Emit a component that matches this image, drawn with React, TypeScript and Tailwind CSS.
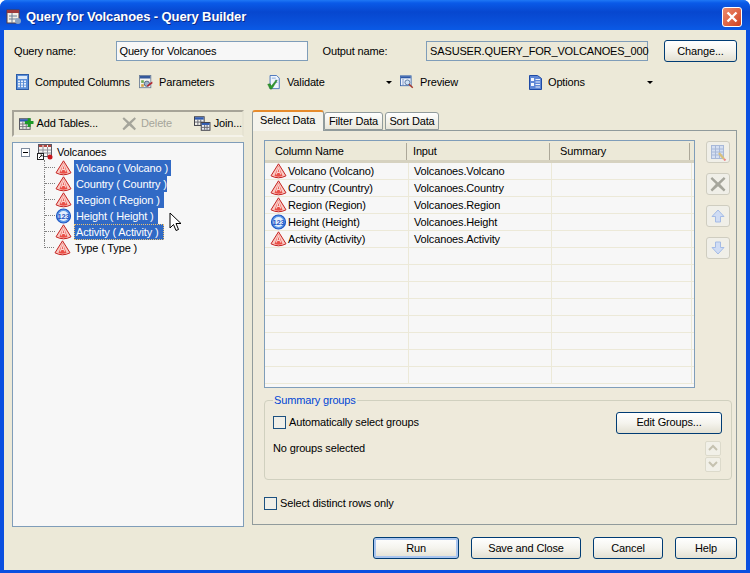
import type { ReactNode } from 'react'

const columns = [
  { name: 'Volcano (Volcano)', input: 'Volcanoes.Volcano', type: 'char' },
  { name: 'Country (Country)', input: 'Volcanoes.Country', type: 'char' },
  { name: 'Region (Region)', input: 'Volcanoes.Region', type: 'char' },
  { name: 'Height (Height)', input: 'Volcanoes.Height', type: 'num' },
  { name: 'Activity (Activity)', input: 'Volcanoes.Activity', type: 'char' },
]

const treeItems = [
  { label: 'Volcano ( Volcano )', type: 'char', width: 'w-[97px]', selected: true },
  { label: 'Country ( Country )', type: 'char', width: 'w-[93px]', selected: true },
  { label: 'Region ( Region )', type: 'char', width: 'w-[90px]', selected: true },
  { label: 'Height ( Height )', type: 'num', width: 'w-[84px]', selected: true },
  { label: 'Activity ( Activity )', type: 'char', width: 'w-[90px]', selected: true, focus: true },
  { label: 'Type ( Type )', type: 'char', width: 'w-[70px]', selected: false },
]

function CharIcon() {
  return (
    <svg width="17" height="16" viewBox="0 0 17 16" className="shrink-0">
      <path d="M8.5 0.8 L16 12.8 Q8.5 16.8 1 12.8 Z" fill="#f9c9c2" stroke="#c4211f" strokeWidth="1" />
      <path d="M8.5 3 L4.5 13 Q8.5 14.6 12.5 13 Z" fill="#ea4f47" />
      <path d="M8.5 4.5 L6.4 11.5 M8.5 4.5 L10.6 11.5 M7.2 9.4 L9.8 9.4" stroke="#fde4e0" strokeWidth="1" fill="none" />
    </svg>
  )
}

function NumIcon() {
  return (
    <svg width="17" height="16" viewBox="0 0 17 16" className="shrink-0">
      <circle cx="8.5" cy="8" r="7" fill="#5f9be8" stroke="#1f56c4" strokeWidth="1.2" />
      <circle cx="8.5" cy="8" r="5" fill="#e4effc" />
      <text x="8.5" y="10.5" textAnchor="middle" fontSize="7.5" fontFamily="Liberation Sans, sans-serif" fontWeight="700" fill="#1f56c4">123</text>
    </svg>
  )
}

function TypeIcon({ type }: { type: string }) {
  return type === 'num' ? <NumIcon /> : <CharIcon />
}

function CalcIcon() {
  return (
    <svg width="13" height="16" viewBox="0 0 13 16">
      <rect x="0.5" y="0.5" width="12" height="15" fill="#5b8fd8" stroke="#2c5ca8" />
      <rect x="2" y="2" width="9" height="3" fill="#dce9f9" />
      {[6.5, 9, 11.5].map((y) => [2, 5, 8].map((x) => <rect key={`${x}-${y}`} x={x} y={y} width="2" height="1.7" fill="#e8f0fb" />))}
    </svg>
  )
}

function ParamsIcon() {
  return (
    <svg width="16" height="16" viewBox="0 0 16 16">
      <rect x="0.5" y="0.5" width="13" height="14" fill="#f2f2f0" stroke="#6d7f96" />
      <rect x="1" y="1" width="12" height="3" fill="#34589c" />
      <rect x="2.5" y="6" width="3" height="3" fill="#6aa84f" />
      <rect x="2.5" y="10.5" width="3" height="3" fill="#d9a441" />
      <circle cx="9" cy="10" r="3" fill="#9fb4cc" stroke="#4a5f7c" />
      <path d="M9 12 L15 7.5 L15.5 9.5 L10 13.5 Z" fill="#b3262e" />
    </svg>
  )
}

function ValidateIcon() {
  return (
    <svg width="16" height="17" viewBox="0 0 16 17">
      <path d="M3.5 0.5 H11 L14 3.5 V15.5 H3.5 Z" fill="#eef4fc" stroke="#3d6cb8" />
      <path d="M5.5 3.5 H10 M9 6 H12 M10 8.5 H12" stroke="#7ea3d8" />
      <path d="M0.8 10.5 L3.5 10 L5 12.5 L10.5 5.5 L11.5 6.5 L5.5 16 L3.5 16 Z" fill="#2f9a2f" stroke="#1c6d1c" strokeWidth="0.5" />
    </svg>
  )
}

function PreviewIcon() {
  return (
    <svg width="17" height="16" viewBox="0 0 17 16">
      <rect x="0.5" y="0.5" width="13" height="12" fill="#eef2fa" stroke="#3360a8" />
      <rect x="1" y="1" width="12" height="2.5" fill="#2d58a6" />
      <path d="M2.5 5.5 H5 M2.5 8 H5 M2.5 10.5 H5" stroke="#5f84c2" />
      <circle cx="9" cy="8.5" r="3" fill="#cfe2f5" stroke="#4a6a94" />
      <path d="M11 10.7 L15.5 15" stroke="#a5352a" strokeWidth="1.8" />
    </svg>
  )
}

function OptionsIcon() {
  return (
    <svg width="13" height="16" viewBox="0 0 13 16">
      <path d="M0.5 1.5 H8.5 L12.5 4.5 V15.5 H0.5 Z" fill="#5f87d6" stroke="#1e4aa5" />
      <rect x="2" y="4" width="3" height="3" fill="#f2f6fd" />
      <rect x="2" y="9" width="3" height="3" fill="#f2f6fd" />
      <path d="M6.5 5.5 H11 M6.5 8 H11 M6.5 10.5 H11 M6.5 13 H11" stroke="#eaf0fb" />
    </svg>
  )
}

function AddTableIcon() {
  return (
    <svg width="15" height="14" viewBox="0 0 15 14">
      <rect x="0.5" y="1.5" width="11" height="11" fill="#f3f3ee" stroke="#55555f" />
      <rect x="1" y="2" width="10" height="2.5" fill="#2f5bb2" />
      <path d="M4 4.5 V12 M7.5 4.5 V12 M1 7 H11 M1 9.7 H11" stroke="#77777f" />
      <path d="M9 0 H12 V3 H15 V6 H12 V9 H9 V6 H6 V3 H9 Z" fill="#1d9a26" transform="translate(0 1)" />
    </svg>
  )
}

function DeleteIcon({ size = 15 }: { size?: number }) {
  return (
    <svg width={size} height={size} viewBox="0 0 15 15">
      <path d="M2 1 L7.5 6 L13 1 L14.5 2.5 L9.5 7.5 L14.5 13 L13 14.5 L7.5 9.5 L2 14.5 L0.5 13 L5.5 7.5 L0.5 2.5 Z" fill="#a5a59b" />
    </svg>
  )
}

function JoinIcon() {
  return (
    <svg width="17" height="15" viewBox="0 0 17 15">
      <rect x="0.5" y="0.5" width="10" height="9" fill="#f3f3ee" stroke="#3d3d46" />
      <rect x="1" y="1" width="9" height="2.5" fill="#2f5bb2" />
      <path d="M4 3.5 V9 M7 3.5 V9 M1 6 H10" stroke="#66666e" />
      <rect x="7.5" y="6.5" width="9" height="8" fill="#e9eef8" stroke="#3d3d46" />
      <rect x="8" y="7" width="8" height="2" fill="#2f5bb2" />
      <path d="M11 9 V14 M13.5 9 V14 M8 11.5 H16" stroke="#66666e" />
    </svg>
  )
}

function TableIcon() {
  return (
    <svg width="16" height="16" viewBox="0 0 16 16">
      <rect x="1.5" y="0.5" width="13" height="12" fill="#f5f5f2" stroke="#5b5b66" />
      <rect x="2" y="1" width="3.5" height="2" fill="#b2453f" />
      <rect x="6.5" y="1" width="3.5" height="2" fill="#b2453f" />
      <rect x="11" y="1" width="3" height="2" fill="#b2453f" />
      <path d="M6 3 V12 M10.5 3 V12 M2 6 H14 M2 9 H14" stroke="#8e8e98" />
      <rect x="0.5" y="9.5" width="6" height="6" fill="#fff" stroke="#222" />
      <path d="M2 14 L5 11 M3.5 11 H5 V12.5" stroke="#222" fill="none" />
      <circle cx="13" cy="13" r="2.5" fill="#c8161d" />
    </svg>
  )
}

function Arrow() {
  return <span className="w-0 h-0 border-x-[3px] border-x-transparent border-t-[3px] border-t-black" />
}

function XpButton({ children, width, def }: { children: ReactNode; width: string; def?: boolean }) {
  return (
    <button className={`${width} h-[22px] shrink-0 rounded-[3px] border border-[#003c74] text-black bg-gradient-to-b from-white via-[#f5f4ee] to-[#e3e0d2] ${def ? 'shadow-[inset_0_0_0_2px_#a9c5ef]' : ''}`}>
      {children}
    </button>
  )
}

function SideButton({ children, mb }: { children: ReactNode; mb: string }) {
  return (
    <div className={`w-6 h-[22px] ${mb} rounded-[3px] border border-[#cfcdc0] bg-[#f0efe8] flex items-center justify-center`}>
      {children}
    </div>
  )
}

function ToolItem({ icon, label, width, arrow }: { icon: ReactNode; label: string; width: string; arrow?: boolean }) {
  return (
    <div className={`${width} shrink-0 flex items-center gap-[6px]`}>
      <span className="flex w-[14px] justify-center">{icon}</span>
      <span className="flex-1">{label}</span>
      {arrow && <Arrow />}
    </div>
  )
}

function Checkbox() {
  return <span className="w-[13px] h-[13px] shrink-0 border border-[#1c5180] bg-[#f0efe8]" />
}

export default function App() {
  return (
    <div className="w-[750px] h-[573px] overflow-hidden bg-white font-['Liberation_Sans',sans-serif] text-[11px] tracking-[-0.15px] text-black">
      <div className="h-full flex flex-col rounded-t-[7px] overflow-hidden bg-[#0a4fe0]">
        <header className="h-[30px] shrink-0 flex items-center pt-[4px] pl-[6px] pr-[8px] bg-[linear-gradient(#1f78f5_0px,#0a5ae8_3px,#0747cf_12px,#0a52dc_24px,#0a5ae6_30px)]">
          <svg width="16" height="16" viewBox="0 0 16 16" className="mr-[4px]">
            <rect x="1" y="1" width="12" height="13" fill="#f2efe6" stroke="#5a3c3c" />
            <rect x="1" y="1" width="12" height="3" fill="#9e3b3b" />
            <path d="M3 7 H11 M3 10 H11 M6 4 V14" stroke="#6d7f96" />
            <circle cx="12" cy="12" r="3" fill="#8ba4c4" />
          </svg>
          <h1 className="flex-1 font-bold text-[13px] text-white tracking-[-0.1px] [text-shadow:1px_1px_0_#0a2a8a]">Query for Volcanoes - Query Builder</h1>
          <div className="w-[20px] h-[20px] rounded-[3px] border border-white bg-gradient-to-br from-[#ec8a6c] to-[#d0401c] flex items-center justify-center">
            <svg width="12" height="12" viewBox="0 0 12 12">
              <path d="M1.5 1.5 L10.5 10.5 M10.5 1.5 L1.5 10.5" stroke="#fff" strokeWidth="2.4" />
            </svg>
          </div>
        </header>

        <div className="flex-1 min-h-0 mx-1 mb-[3px] bg-[#ece9d8] flex flex-col pl-[8px] pr-[9px]">
          <div className="h-[22px] mt-[10px] shrink-0 flex items-center">
            <label className="w-[104px] pl-[2px]">Query name:</label>
            <div className="w-[193px] h-5 border border-[#7f9db9] bg-[#f7f7f7] flex items-center pl-[3px]">Query for Volcanoes</div>
            <label className="w-[119px] pl-[15px]">Output name:</label>
            <div className="w-[222px] h-5 border border-[#7f9db9] bg-[#ece9d8] flex items-center pl-[3px] whitespace-nowrap">SASUSER.QUERY_FOR_VOLCANOES_000</div>
            <div className="w-[16px]" />
            <XpButton width="w-[73px]">Change...</XpButton>
          </div>

          <div className="h-5 mt-[10px] shrink-0 flex items-center pl-[3px]">
            <ToolItem icon={<CalcIcon />} label="Computed Columns" width="w-[124px]" />
            <ToolItem icon={<ParamsIcon />} label="Parameters" width="w-[128px]" />
            <ToolItem icon={<ValidateIcon />} label="Validate" width="w-[125px]" arrow />
            <div className="w-[8px]" />
            <ToolItem icon={<PreviewIcon />} label="Preview" width="w-[128px]" />
            <ToolItem icon={<OptionsIcon />} label="Options" width="w-[125px]" arrow />
          </div>

          <div className="flex-1 min-h-0 mt-[18px] flex">
            <div className="w-[232px] h-[417px] shrink-0 flex flex-col">
              <div className="h-[27px] shrink-0 flex items-center border-2 border-[#a7a498] border-r-[#e6e3d2] border-b-[#f5f3ea] pl-[5px]">
                <AddTableIcon />
                <span className="ml-[3px] w-[88px]">Add Tables...</span>
                <DeleteIcon />
                <span className="ml-[5px] w-[55px] text-[#a5a59b]">Delete</span>
                <JoinIcon />
                <span className="ml-[3px]">Join...</span>
              </div>
              <div className="flex-1 mt-[5px] border border-[#7f9db9] bg-[#f7f7f7] pl-[8px] pt-px">
                <div className="h-4 flex items-center">
                  <span className="w-[9px] h-[9px] border border-[#7f8b9c] bg-white flex items-center justify-center">
                    <span className="w-[5px] h-px bg-black" />
                  </span>
                  <span className="ml-[7px]"><TableIcon /></span>
                  <span className="ml-[4px]">Volcanoes</span>
                </div>
                <div className="pl-[23px]">
                  {treeItems.map((item, i) => (
                    <div key={item.label} className={`h-4 flex items-center ${i < treeItems.length - 1 ? 'border-l border-dotted border-[#808080]' : ''}`}>
                      <span className={`w-[10px] h-2 self-start border-b border-dotted border-[#808080] ${i === treeItems.length - 1 ? 'border-l' : ''}`} />
                      <TypeIcon type={item.type} />
                      <span className={`ml-[2px] ${item.width} h-4 flex items-center pl-[2px] whitespace-nowrap ${item.selected ? 'bg-[#316ac5] text-white' : ''} ${item.focus ? 'outline-1 outline-dotted outline-[#e8c070] -outline-offset-1' : ''}`}>
                        {item.label}
                      </span>
                      {i === 3 && (
                        <svg width="13" height="21" viewBox="0 0 13 21" className="absolute ml-[124px] mt-[13px]">
                          <path d="M1 1 V16 L4.5 12.5 L7 18.5 L9.5 17.5 L7 11.5 L12 11.5 Z" fill="#fff" stroke="#000" />
                        </svg>
                      )}
                    </div>
                  ))}
                </div>
              </div>
            </div>

            <div className="w-[485px] ml-[8px] h-[415px] flex flex-col">
              <div className="h-[20px] shrink-0 flex items-end">
                <div className="h-[21px] w-[72px] -mb-px z-10 relative border border-[#919b9c] border-b-0 border-t-[#e68b2c] border-t-2 rounded-t-[3px] bg-[#f4f3ec] flex items-center pl-[7px] pb-[2px]">Select Data</div>
                <div className="h-[18px] w-[59px] border border-[#919b9c] rounded-t-[3px] bg-gradient-to-b from-white to-[#e8e6da] flex items-center justify-center">Filter Data</div>
                <div className="h-[18px] ml-[2px] w-[54px] border border-[#919b9c] rounded-t-[3px] bg-gradient-to-b from-white to-[#e8e6da] flex items-center justify-center">Sort Data</div>
              </div>

              <div className="flex-1 border border-[#919b9c] bg-[#eeeadb] pt-[9px] pl-[11px] pr-[4px] flex flex-col">
                <div className="flex shrink-0">
                  <div className="w-[431px] h-[248px] border border-[#7f9db9] bg-[#f7f7f7] overflow-hidden">
                    <div className="h-[22px] pt-[2px] flex items-center bg-[#ece9d8] border-b-[3px] border-[#d6d2c0]">
                      <span className="w-[142px] pl-[10px] border-r border-[#aca899]">Column Name</span>
                      <span className="w-[143px] pl-[6px] border-r border-[#aca899]">Input</span>
                      <span className="w-[140px] pl-[10px] border-r border-[#aca899]">Summary</span>
                    </div>
                    {Array.from({ length: 13 }).map((_, i) => {
                      const col = columns[i]
                      return (
                        <div key={i} className="h-[17px] flex border-b border-[#ece9d8]">
                          <div className="w-[144px] flex items-center pl-[5px] border-r border-[#ece9d8] whitespace-nowrap">
                            {col && <TypeIcon type={col.type} />}
                            {col && <span className="ml-px">{col.name}</span>}
                          </div>
                          <div className="w-[143px] flex items-center pl-[5px] border-r border-[#ece9d8]">{col?.input}</div>
                          <div className="w-[140px] border-r border-[#ece9d8]" />
                        </div>
                      )
                    })}
                  </div>
                  <div className="ml-[11px] flex flex-col pt-[1px]">
                    <SideButton mb="mb-[10px]">
                      <svg width="17" height="17" viewBox="0 0 17 17">
                        <rect x="1.5" y="1.5" width="12" height="13" fill="#d5dff2" stroke="#a7b8d8" />
                        <path d="M5.5 2 V14 M9.5 2 V14 M2 5 H13 M2 8 H13 M2 11 H13" stroke="#a7b8d8" />
                        <path d="M9 9 L14 15" stroke="#d9c07a" strokeWidth="2.2" />
                        <path d="M14 15 L15.5 16.5" stroke="#e88" strokeWidth="2" />
                      </svg>
                    </SideButton>
                    <SideButton mb="mb-[10px]"><DeleteIcon size={16} /></SideButton>
                    <SideButton mb="mb-[10px]">
                      <svg width="14" height="14" viewBox="0 0 14 14">
                        <path d="M7 1 L13 7.5 H9.5 V13 H4.5 V7.5 H1 Z" fill="#cfdcf4" stroke="#a4bbe6" />
                      </svg>
                    </SideButton>
                    <SideButton mb="mb-0">
                      <svg width="14" height="14" viewBox="0 0 14 14">
                        <path d="M7 13 L13 6.5 H9.5 V1 H4.5 V6.5 H1 Z" fill="#cfdcf4" stroke="#a4bbe6" />
                      </svg>
                    </SideButton>
                  </div>
                </div>

                <fieldset className="mt-[4px] w-[468px] h-[88px] border border-[#d0d0bf] rounded-[4px] pl-[8px] pr-[9px]">
                  <legend className="px-px text-[#0046d5]">Summary groups</legend>
                  <div className="flex items-center h-[22px] mt-[3px]">
                    <Checkbox />
                    <span className="ml-[3px] flex-1">Automatically select groups</span>
                    <XpButton width="w-[106px]">Edit Groups...</XpButton>
                  </div>
                  <div className="flex mt-[7px]">
                    <span className="flex-1 -mt-px">No groups selected</span>
                    <div className="w-[16px] mr-[1px] flex flex-col gap-px">
                      {['M2 8 L6 4 L10 8', 'M2 4 L6 8 L10 4'].map((d) => (
                        <span key={d} className="h-[15px] border border-[#dcdacb] rounded-[2px] bg-[#f1f0e8] flex items-center justify-center">
                          <svg width="12" height="12" viewBox="0 0 12 12">
                            <path d={d} fill="none" stroke="#c5c2b0" strokeWidth="2" />
                          </svg>
                        </span>
                      ))}
                    </div>
                  </div>
                </fieldset>

                <div className="mt-[15px] flex items-center">
                  <Checkbox />
                  <span className="ml-[3px]">Select distinct rows only</span>
                </div>
              </div>
            </div>
          </div>

          <div className="h-[22px] shrink-0 mb-[11px] flex justify-end gap-3">
            <XpButton width="w-[86px]" def>Run</XpButton>
            <XpButton width="w-[110px]">Save and Close</XpButton>
            <XpButton width="w-[70px]">Cancel</XpButton>
            <XpButton width="w-[62px]">Help</XpButton>
          </div>
        </div>
      </div>
    </div>
  )
}
